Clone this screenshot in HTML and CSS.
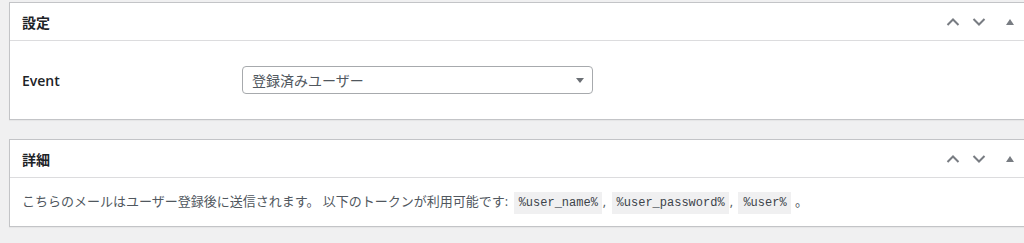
FILE: index.html
```html
<!DOCTYPE html>
<html lang="ja">
<head>
    <meta charset="UTF-8">
    <title>設定</title>
    <link rel="stylesheet" href="styles.css">
</head>
<body>
    <div class="wrap">
        <div class="postbox">
            <div class="postbox-header">
                <h2>設定</h2>
                <div class="handle-actions">
                    <span class="handle up"><svg width="14" height="10" viewBox="0 0 14 10"><path d="M1.5 8 L7 2.5 L12.5 8" fill="none" stroke="#787c82" stroke-width="2"/></svg></span>
                    <span class="handle down"><svg width="14" height="10" viewBox="0 0 14 10"><path d="M1.5 2 L7 7.5 L12.5 2" fill="none" stroke="#787c82" stroke-width="2"/></svg></span>
                    <span class="handle toggle"><svg width="8" height="6" viewBox="0 0 8 6"><path d="M0 6 L4 0 L8 6 Z" fill="#787c82"/></svg></span>
                </div>
            </div>
            <div class="inside">
                <div class="form-row">
                    <label class="form-label">Event</label>
                    <div class="select">
                        <span>登録済みユーザー</span>
                        <svg width="8" height="5" viewBox="0 0 8 5"><path d="M0 0 L8 0 L4 5 Z" fill="#6b6f74"/></svg>
                    </div>
                </div>
            </div>
        </div>

        <div class="postbox">
            <div class="postbox-header">
                <h2>詳細</h2>
                <div class="handle-actions">
                    <span class="handle up"><svg width="14" height="10" viewBox="0 0 14 10"><path d="M1.5 8 L7 2.5 L12.5 8" fill="none" stroke="#787c82" stroke-width="2"/></svg></span>
                    <span class="handle down"><svg width="14" height="10" viewBox="0 0 14 10"><path d="M1.5 2 L7 7.5 L12.5 2" fill="none" stroke="#787c82" stroke-width="2"/></svg></span>
                    <span class="handle toggle"><svg width="8" height="6" viewBox="0 0 8 6"><path d="M0 6 L4 0 L8 6 Z" fill="#787c82"/></svg></span>
                </div>
            </div>
            <div class="inside desc">
                <p>こちらのメールはユーザー登録後に送信されます。 以下のトークンが利用可能です: <code>%user_name%</code>, <code>%user_password%</code>, <code>%user%</code> 。</p>
            </div>
        </div>
    </div>
</body>
</html>
```

FILE: styles.css
```css
html,
body {
    margin: 0;
    padding: 0;
    background: #f0f0f1;
    font-family: "Open Sans", "Noto Sans CJK JP", sans-serif;
    color: #1d2327;
}

.wrap {
    padding: 2px 0 0 9px;
}

.postbox {
    background: #fff;
    border: 1px solid #c3c4c7;
    border-right: none;
    margin-bottom: 19px;
    box-shadow: 0 1px 1px rgba(0, 0, 0, 0.04);
}

.postbox-header {
    display: flex;
    align-items: center;
    justify-content: space-between;
    height: 37px;
    border-bottom: 1px solid #dcdcde;
}

.postbox-header h2 {
    margin: 0;
    padding-left: 12px;
    font-size: 14px;
    font-weight: 700;
    color: #1d2327;
}

.handle-actions {
    display: flex;
    align-items: center;
}

.handle {
    display: flex;
    align-items: center;
    justify-content: center;
    width: 26px;
    height: 36px;
}

.handle.toggle {
    width: 22px;
    justify-content: flex-end;
    padding-right: 10px;
}

.inside {
    padding: 0 12px;
}

.form-row {
    display: flex;
    align-items: center;
    height: 78px;
}

.form-label {
    width: 220px;
    font-size: 14px;
    font-weight: 600;
}

.select {
    display: flex;
    align-items: center;
    justify-content: space-between;
    box-sizing: border-box;
    width: 351px;
    height: 28px;
    padding: 0 8px 0 9px;
    border: 1px solid #a7aaad;
    border-radius: 4px;
    font-size: 14px;
    color: #50575e;
}

.desc p {
    margin: 0;
    line-height: 46px;
    font-size: 13px;
    color: #50575e;
}

code {
    margin: 0 1px 0 2px;
    padding: 4px 4px 4px 5px;
    background: #f0f0f1;
    font-family: "Liberation Mono", monospace;
    font-size: 12px;
    color: #3c434a;
}
```
